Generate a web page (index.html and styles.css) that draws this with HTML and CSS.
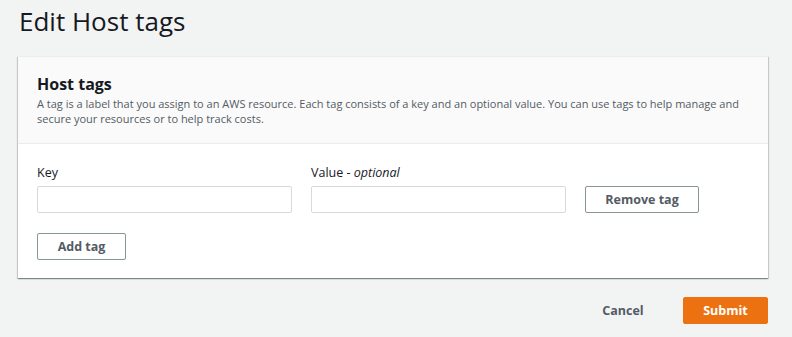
FILE: index.html
```html
<!DOCTYPE html>
<html>
  <head>
    <title>Edit Host tags</title>
    <meta charset="UTF-8" />
    <link rel="stylesheet" href="styles.css">
  </head>
  <body>
    <h1>Edit Host tags</h1>

    <div class="card">
      <div class="card-header">
        <h2>Host tags</h2>
        <p>
          A tag is a label that you assign to an AWS resource. Each tag consists
          of a key and an optional value. You can use tags to help manage and
          secure your resources or to help track costs.
        </p>
      </div>
      <div class="card-body">
        <div class="tag-row">
          <div class="field">
            <label>Key</label>
            <input type="text" />
          </div>
          <div class="field">
            <label>Value - <i>optional</i></label>
            <input type="text" />
          </div>
          <button class="btn remove">Remove tag</button>
        </div>
        <button class="btn add">Add tag</button>
      </div>
    </div>

    <div class="actions">
      <button class="btn-link">Cancel</button>
      <button class="btn-primary">Submit</button>
    </div>
  </body>
</html>
```

FILE: styles.css
```css
body {
  font-family: "Open Sans", Arial, sans-serif;
  background: #f2f3f3;
  color: #16191f;
  margin: 0;
  padding: 0 24px 0 18px;
}

h1 {
  font-size: 26px;
  font-weight: 400;
  line-height: 32px;
  margin: 0;
  padding: 5px 0 0 1px;
}

.card {
  margin-top: 19px;
  background: #fff;
  border-top: 1px solid #eaeded;
  box-shadow: 0 1px 1px 0 rgba(0, 28, 36, 0.3), 1px 1px 1px 0 rgba(0, 28, 36, 0.15),
    -1px 1px 1px 0 rgba(0, 28, 36, 0.15);
}

.card-header {
  background: #fafafa;
  border-bottom: 1px solid #eaeded;
  padding: 17px 20px 17px 19px;
}

.card-header h2 {
  font-size: 16px;
  font-weight: 700;
  line-height: 20px;
  margin: 0 0 3px;
}

.card-header p {
  font-size: 11px;
  line-height: 14.5px;
  color: #545b64;
  margin: 0;
  max-width: 710px;
}

.card-body {
  padding: 20px 20px 18px 19px;
}

.tag-row {
  display: flex;
  align-items: flex-end;
  gap: 19px;
}

.field {
  width: 255px;
}

.field label {
  display: block;
  font-size: 12.5px;
  line-height: 17px;
  margin-bottom: 5px;
}

.field input {
  display: block;
  box-sizing: border-box;
  width: 100%;
  height: 27px;
  border: 1px solid #d5dbdb;
  border-radius: 2px;
  background: #fff;
}

.btn {
  font-family: inherit;
  font-size: 12.5px;
  font-weight: 700;
  color: #545b64;
  background: #fff;
  border: 1px solid #879596;
  border-radius: 2px;
  height: 27px;
  padding: 0;
}

.remove {
  width: 114px;
}

.add {
  display: block;
  width: 89px;
  margin-top: 20px;
}

.actions {
  display: flex;
  justify-content: flex-end;
  align-items: center;
  gap: 20px;
  margin-top: 19px;
}

.btn-link {
  font-family: inherit;
  font-size: 12.5px;
  font-weight: 700;
  color: #545b64;
  background: none;
  border: none;
  width: 80px;
  height: 27px;
  padding: 0;
}

.btn-primary {
  font-family: inherit;
  font-size: 12.5px;
  font-weight: 700;
  color: #fff;
  background: #ec7211;
  border: 1px solid #ec7211;
  border-radius: 2px;
  width: 85px;
  height: 27px;
  padding: 0;
}
```
